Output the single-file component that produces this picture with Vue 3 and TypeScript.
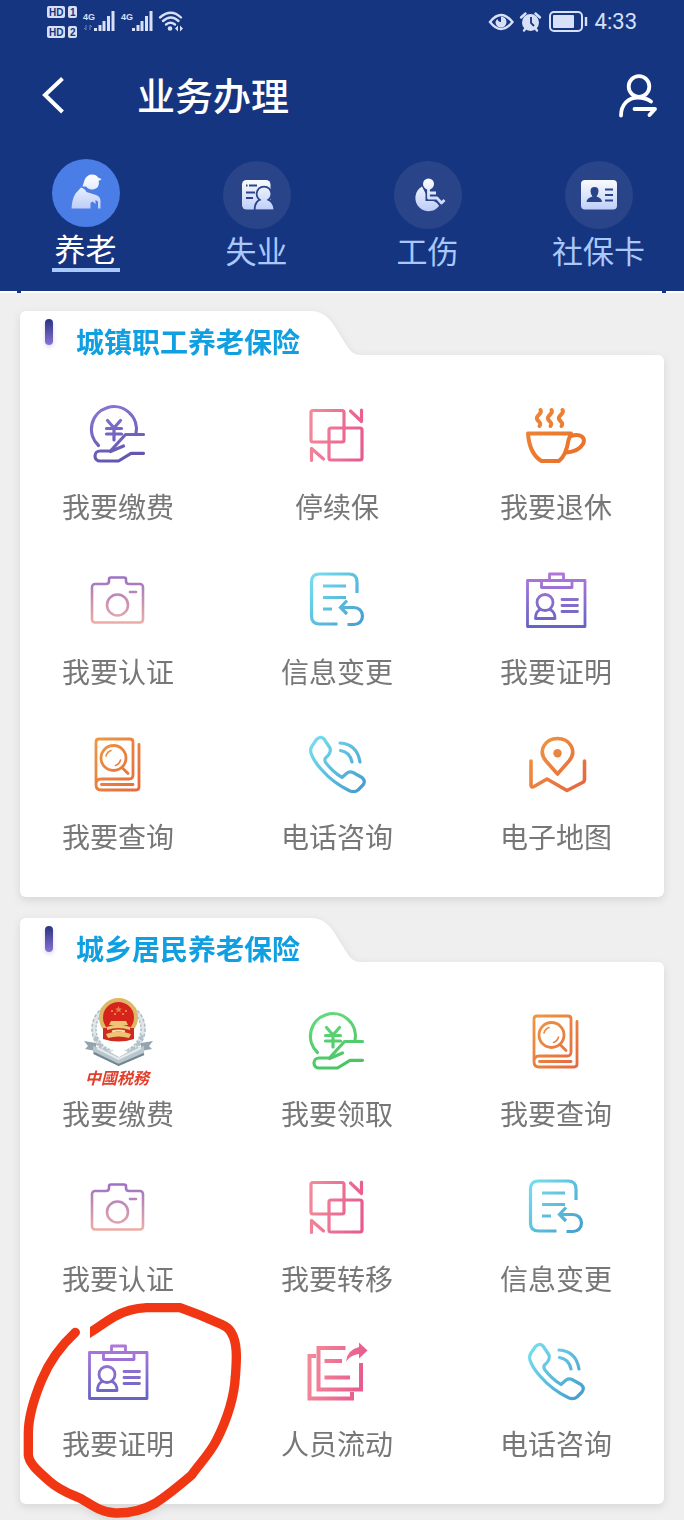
<script setup lang="ts">
import { ref } from 'vue'

interface Glyph {
  tone: string
  width: number
  strokes: string[]
  solids?: string[]
  sharp?: boolean
}

interface Service {
  label: string
  icon: string
  tone?: string
  marked?: boolean
}

interface Section {
  title: string
  services: Service[]
}

const tabs = [
  { id: 'elder', label: '养老' },
  { id: 'jobless', label: '失业' },
  { id: 'injury', label: '工伤' },
  { id: 'card', label: '社保卡' },
]
const active = ref('elder')

const glyphs: Record<string, Glyph> = {
  coin: {
    tone: 'violet',
    width: 3.2,
    strokes: [
      'M16.5 46.5A22.5 22.5 0 1 1 54 34.5',
      'M61.5 35.5H43.5L28.5 52H18a5 5 0 0 0 0 10H36.5L49 54.3H61.5',
      'M28.5 52.5L41.500 47',
      'M25.5 21.5L32 29L38.5 21.5M32 29V41M24.5 29.5H39.5M24.5 35H39.5',
    ],
  },
  swap: {
    tone: 'pink',
    width: 3.2,
    strokes: [
      'M12 11.5H41a2 2 0 0 1 2 2V41a2 2 0 0 1-2 2H12a2 2 0 0 1-2-2V13.5a2 2 0 0 1 2-2z',
      'M30 29H59a2 2 0 0 1 2 2V59a2 2 0 0 1-2 2H30a2 2 0 0 1-2-2V31a2 2 0 0 1 2-2z',
      'M49.5 12L60.500 22.5V11',
      'M22.5 60L10.500 49.5V61.5',
    ],
  },
  cup: {
    tone: 'orange',
    width: 4,
    strokes: [
      'M8 34.5H51L48.5 41C47 51 44 58 39 62H21.5C13 57 9 48 8 34.5z',
      'M51 37C61 34 66 39 63 45C60 50 54 53 46 53.5',
      'M20.5 11C23 15 15.5 16 17 20C18 23 22 23 19.5 27',
      'M31.5 11C34 15 26.5 16 28 20C29 23 33 23 30.5 27',
      'M42.5 11C45 15 37.5 16 39 20C40 23 44 23 41.5 27',
    ],
  },
  camera: {
    tone: 'blush',
    width: 2.6,
    strokes: [
      'M13 20H24q3 0 3-3V15.5q0-2 2-2H42q2 0 2 2V17q0 3 3 3H58a3 3 0 0 1 3 3V55.5a3 3 0 0 1-3 3H13a3 3 0 0 1-3-3V23a3 3 0 0 1 3-3z',
      'M35.5 30.5a10.5 10.5 0 1 1 0 21a10.5 10.5 0 1 1 0-21z',
      'M48 28H54',
    ],
  },
  change: {
    tone: 'cyan',
    width: 3.2,
    sharp: true,
    strokes: [
      'M56 29V18q0-8-8-8H18.5q-8 0-8 8V52q0 8 8 8H36.5',
      'M22 22H45M22 33.5H45M22 45H31',
      'M46.5 60.5H53A8.5 8.5 0 0 0 53 43.5H40',
      'M46 36.5L39.5 43.5L46 50',
    ],
  },
  badge: {
    tone: 'lilac',
    width: 2.8,
    strokes: [
      'M7.5 16.5H65V62.5H7.5z',
      'M29.5 16V10H43.5V16',
      'M21.5 17V23.5H52V17',
      'M25 30.5a8 8 0 1 1 0 16a8 8 0 1 1 0-16z',
      'M20 45.5C17 47 15.5 50 15.5 54.5H35C35 50 33.5 47 30 45.5',
      'M42 35.5H57.5M42 41.5H57.5M42 47.5H57.5',
    ],
  },
  book: {
    tone: 'amber',
    width: 2.8,
    strokes: [
      'M14 56V13q0-3 3-3H48q3 0 3 3V46q0 4-4 4H19q-5 0-5 5.5T19 61H54q3 0 3-3V15.5',
      'M19.5 55.5H51',
      'M31.5 16.5a12.5 12.5 0 1 1 0 25a12.5 12.5 0 1 1 0-25z',
      'M40 38.5L46 44.5',
    ],
  },
  phone: {
    tone: 'cyan',
    width: 3.2,
    strokes: [
      'M11 17L15.500 10.500Q19.500 6.500 23 10L29 19Q30.500 24 24.500 29Q23 31 25 34Q32 43 41 48.500L46 44Q49 42 52 43.500L61 48.500Q65 52 62 56L57 61Q54 63.500 49 62Q32 54 20 40Q12 31 10 24Q9 20 11 17z',
      'M39 14Q56 15 59 33',
      'M39.5 21.5Q49 23 51 33',
    ],
  },
  map: {
    tone: 'amber',
    width: 3.6,
    strokes: [
      'M37.5 45L26 32C17 21 26 9.5 37.5 9.5C49 9.5 58 21 49 32z',
      'M11 32V56Q11 59 14 57.5L27 50L47 61.5L62.5 53.5Q64.5 52.5 64.5 50V32',
    ],
    solids: ['M37.5 20a4.2 4.2 0 1 1 0 8.4a4.2 4.2 0 1 1 0-8.4z'],
  },
  share: {
    tone: 'pink',
    width: 4,
    sharp: true,
    strokes: [
      'M15 20H8.5V62.5H51V56',
      'M44.5 12H17.5V53.5H60V27',
      'M23.5 25H41M23.5 41.5H49',
    ],
    solids: ['M66.5 14.5L58 6.5V11Q46 14 45 25.5Q50 18.5 58 18V22.5z'],
  },
}

const sections: Section[] = [
  {
    title: '城镇职工养老保险',
    services: [
      { label: '我要缴费', icon: 'coin' },
      { label: '停续保', icon: 'swap' },
      { label: '我要退休', icon: 'cup' },
      { label: '我要认证', icon: 'camera' },
      { label: '信息变更', icon: 'change' },
      { label: '我要证明', icon: 'badge' },
      { label: '我要查询', icon: 'book' },
      { label: '电话咨询', icon: 'phone' },
      { label: '电子地图', icon: 'map' },
    ],
  },
  {
    title: '城乡居民养老保险',
    services: [
      { label: '我要缴费', icon: 'tax' },
      { label: '我要领取', icon: 'coin', tone: 'green' },
      { label: '我要查询', icon: 'book' },
      { label: '我要认证', icon: 'camera' },
      { label: '我要转移', icon: 'swap' },
      { label: '信息变更', icon: 'change' },
      { label: '我要证明', icon: 'badge', marked: true },
      { label: '人员流动', icon: 'share' },
      { label: '电话咨询', icon: 'phone' },
    ],
  },
]

const tones = [
  { id: 'violet', from: '#8f7ad6', to: '#5f54ae', x2: 20, y2: 70 },
  { id: 'green', from: '#67dc80', to: '#48c463', x2: 20, y2: 70 },
  { id: 'pink', from: '#f5929a', to: '#e6578f', x2: 72, y2: 20 },
  { id: 'orange', from: '#ee8a3c', to: '#ea6f28', x2: 50, y2: 72 },
  { id: 'amber', from: '#f0a040', to: '#e5683f', x2: 60, y2: 60 },
  { id: 'blush', from: '#9068c8', to: '#f4b0a4', x2: 0, y2: 62 },
  { id: 'cyan', from: '#7ce8f2', to: '#3f98cc', x2: 66, y2: 66 },
  { id: 'lilac', from: '#b578da', to: '#6264c4', x2: 0, y2: 64 },
]

const wreath = Array.from({ length: 9 }, (_, i) => 20 + i * 17)
</script>

<template>
  <div class="page">
    <svg class="defs" width="0" height="0" aria-hidden="true">
      <defs>
        <linearGradient v-for="t in tones" :id="t.id" :key="t.id" gradientUnits="userSpaceOnUse" x1="0" y1="6" :x2="t.x2" :y2="t.y2">
          <stop offset="0" :stop-color="t.from" />
          <stop offset="1" :stop-color="t.to" />
        </linearGradient>
        <linearGradient id="frost" gradientUnits="userSpaceOnUse" x1="0" y1="16" x2="0" y2="50">
          <stop offset="0" stop-color="#ffffff" />
          <stop offset="1" stop-color="#bccdf8" />
        </linearGradient>
      </defs>
    </svg>

    <header class="top">
      <div class="status">
        <svg width="140" height="36" viewBox="46 4 140 36" aria-hidden="true">
          <g fill="#d7e0f7">
            <rect x="47" y="6" width="18" height="12" rx="2" />
            <rect x="68" y="6" width="9" height="12" rx="2" />
            <rect x="47" y="26" width="18" height="12" rx="2" />
            <rect x="68" y="26" width="9" height="12" rx="2" />
            <path d="M94 28h3v3h-3zM98.500 25h3v6h-3zM102.500 21h3v10h-3zM107 16h3v15h-3zM111.500 11h3v20h-3z" />
            <path d="M132 28h3v3h-3zM136.500 25h3v6h-3zM140.500 21h3v10h-3zM145 16h3v15h-3zM149.500 11h3v20h-3z" />
            <circle cx="170" cy="28.500" r="2.300" />
            <path d="M178 25.500l-3 3l3 3zM180 25.500l3 3l-3 3z" />
          </g>
          <g class="net">
            <text x="83" y="20">4G</text>
            <text x="121" y="20">4G</text>
          </g>
          <g class="hd">
            <text x="49" y="16">HD</text>
            <text x="70" y="16">1</text>
            <text x="49" y="36">HD</text>
            <text x="70" y="36">2</text>
          </g>
          <path d="M86 25v5M84 28l2 2M90 30v-5M92 27l-2-2" stroke="#6f86bd" fill="none" />
          <path d="M160 17.500Q171 8 181 17.500M163 21Q171 14 178.500 21M166 24.500Q170.500 21 175 24.500" stroke="#d7e0f7" stroke-width="2.400" fill="none" stroke-linecap="round" />
        </svg>
        <div class="right">
          <svg width="100" height="26" viewBox="488 9 100 26" aria-hidden="true">
            <path d="M490 22Q501 8 512.500 22Q501 36 490 22z" fill="none" stroke="#d7e0f7" stroke-width="2.400" />
            <path d="M501 22V16.500A5.500 5.500 0 1 1 495.500 22Q496 20 497.500 19Q498 22 501 22z" fill="#d7e0f7" />
            <circle cx="530.500" cy="22.500" r="8.500" fill="#d7e0f7" />
            <path d="M521 17.500l4.500-4M540 17.500l-4.500-4M524 30.500l2-2.500M537 30.500l-2-2.500" stroke="#d7e0f7" stroke-width="2.400" stroke-linecap="round" />
            <path d="M531 17v6l3 3" stroke="#163581" stroke-width="1.800" fill="none" />
            <rect x="550" y="12" width="32" height="19" rx="4" fill="none" stroke="#d7e0f7" stroke-width="2" />
            <rect x="553" y="15" width="21" height="13" rx="1" fill="#d7e0f7" />
            <path d="M586 17v9" stroke="#d7e0f7" stroke-width="2.400" />
          </svg>
          <time>4:33</time>
        </div>
      </div>

      <div class="titlebar">
        <button type="button" aria-label="返回">
          <svg width="28" height="40" viewBox="0 0 28 40"><path d="M22.500 2.500L5 19L22.500 36" fill="none" stroke="#fff" stroke-width="4" /></svg>
        </button>
        <h1>业务办理</h1>
        <button type="button" aria-label="我的">
          <svg width="40" height="44" viewBox="618 75 40 44" fill="none" stroke="#fff" stroke-width="3.800" stroke-linecap="round" stroke-linejoin="round">
            <circle cx="639" cy="87.500" r="10.300" />
            <path d="M621 116.500C621 106 628 98.500 638 98.500C643 98.500 647 99.500 651 102.500" />
            <path d="M634.500 110H655L649.500 116" />
          </svg>
        </button>
      </div>

      <nav class="tabs">
        <button v-for="t in tabs" :key="t.id" type="button" class="tab" :class="{ on: active === t.id }" @click="active = t.id">
          <svg class="disc" viewBox="0 0 68 68" aria-hidden="true">
            <g v-if="t.id === 'elder'" fill="url(#frost)">
              <path d="M30.500 27.500L32.500 21Q35 15.500 40 15.500Q44.500 15.500 46 18.500L49.500 20Q48.500 21.500 46.800 21.500Q48 29.500 41 30.500Q36.500 31 34 27.500z" />
              <path d="M19.500 49.500Q20 40 23.500 34.500L29 28.500Q33 29.500 34.500 33L44 36Q48.500 37.500 48.500 42V49.500H46V42.500L43.500 41V45L40.500 42.500L38.500 44V49.500z" />
            </g>
            <g v-else-if="t.id === 'jobless'">
              <rect x="19" y="19" width="28.500" height="29.500" rx="4.500" fill="url(#frost)" />
              <path d="M23 24.500h1.500M26 24.500h8M23 31.500h9M23 37h7" stroke="#2a4489" stroke-width="1.800" />
              <g fill="url(#frost)" stroke="#2a4489" stroke-width="3.600" paint-order="stroke">
                <path d="M32.500 48.500Q32.500 41 38.500 39Q34.500 36.500 34.500 32.500Q35.500 26.500 41 26.500T47.500 32.500Q47.500 36.500 43.500 39Q50 41 50.500 48.500z" />
              </g>
              <path d="M31 48.700H52V52H31z" fill="#2a4489" />
            </g>
            <g v-else-if="t.id === 'injury'">
              <path d="M28 25.500A13.200 13.200 0 1 0 46 43.500L34 37z" fill="url(#frost)" />
              <path d="M34.500 28V37H43L47.500 43L51 38.500M35 32.500H43" fill="none" stroke="#2a4489" stroke-width="6" />
              <path d="M34.500 28V37H43L47.500 42L50.500 39M35 32H42" fill="none" stroke="url(#frost)" stroke-width="2.800" stroke-linejoin="round" />
              <circle cx="34.500" cy="23" r="5.500" fill="url(#frost)" />
            </g>
            <g v-else>
              <rect x="16" y="19" width="36" height="29.500" rx="4" fill="url(#frost)" />
              <path d="M21.500 41Q21.500 37 27.500 35.500Q25.500 33 25.500 30Q25.500 26 29.500 26T33.500 30Q33.500 33 31.500 35.500Q37 37 37 41z" fill="#2a4489" />
              <path d="M40 28.500h8M40 34h8M40 39.500h8" stroke="#2a4489" stroke-width="2" />
            </g>
          </svg>
          <span class="tab-label">{{ t.label }}</span>
        </button>
      </nav>
    </header>

    <main class="content">
      <section v-for="s in sections" :key="s.title" class="card">
        <div class="card-head">
          <div class="card-title">
            <i class="bar"></i>
            <h2>{{ s.title }}</h2>
          </div>
          <svg width="58" height="44" viewBox="0 0 58 44" aria-hidden="true"><path d="M0 0H7C20 0 27 7 34 19L42 32C47 40 50 44 58 44H0z" fill="#fff" /></svg>
        </div>
        <div class="grid">
          <button v-for="(item, i) in s.services" :key="i" type="button" class="item">
            <svg v-if="item.icon === 'tax'" class="icon" viewBox="0 0 72 72" aria-hidden="true">
              <g fill="none" stroke="#aebcc4">
                <circle cx="36.500" cy="23" r="24.500" stroke-width="5" stroke="#dfe6e9" />
                <circle cx="36.500" cy="23" r="26.500" stroke-width="1.500" stroke-dasharray="3 2" />
                <circle cx="36.500" cy="23" r="22.500" stroke-width="1.500" stroke-dasharray="2 2" />
              </g>
              <g fill="#b3c0c7">
                <ellipse v-for="a in wreath" :key="a" cx="61" cy="23" rx="1.500" ry="3" :transform="`rotate(${a} 36.5 23)`" />
              </g>
              <path d="M2 35L14 37V45L3 43L6 40z" fill="#94a4ad" />
              <path d="M71 35L59 37V45L70 43L67 40z" fill="#94a4ad" />
              <path d="M11 40L25 44Q36.500 54 48 44L62 40V49L37 60L11 48z" fill="#b9c6cd" />
              <path d="M12 47L36.500 59L62 48" fill="none" stroke="#718690" stroke-width="2" />
              <path d="M15 42L36.500 53L59 42" fill="none" stroke="#e4ebee" stroke-width="2" />
              <path d="M28 46Q36.500 40 46 46L37 51z" fill="#fff" />
              <circle cx="36.500" cy="11.500" r="17.500" fill="#d6241d" stroke="#dcb867" stroke-width="4" />
              <path d="M21 22h31v11Q36.500 38 21 33z" fill="#ce2b20" />
              <path d="M29 15h15l2 4H27zM25 21q11.500-5 23 0v3q-11.500-4-23 0zM24 28q12.500-5 25 0l-2 4q-10.500-3-21 0z" fill="#ecc575" />
              <path d="M30 25.500q6.500-2 13 0" fill="none" stroke="#f7e1a4" stroke-width="2" />
              <path d="M36.500 0l1 2.500h2.500l-2 1.500l1 2.500l-2.500-1.500l-2.500 1.500l1-2.500l-2-1.500h2.500z" fill="#e88143" />
              <path d="M29 5h2M32 8h2M40 8h2M43 5h2" stroke="#e88143" stroke-width="2" />
              <text class="tax-name" x="3" y="78">中國税務</text>
            </svg>
            <svg v-else class="icon" viewBox="0 0 72 72" aria-hidden="true">
              <g
                fill="none"
                :stroke="`url(#${item.tone ?? glyphs[item.icon].tone})`"
                :stroke-width="glyphs[item.icon].width"
                :stroke-linecap="glyphs[item.icon].sharp ? 'butt' : 'round'"
                :stroke-linejoin="glyphs[item.icon].sharp ? 'miter' : 'round'"
              >
                <path v-for="d in glyphs[item.icon].strokes" :key="d" :d="d" />
                <path v-if="item.icon === 'book'" d="M24 27q1-4 5-5.500M38.500 31q-1 4-5 5.500" stroke-width="1.600" />
              </g>
              <path v-for="d in glyphs[item.icon].solids ?? []" :key="d" :d="d" :fill="`url(#${glyphs[item.icon].tone})`" />
            </svg>
            <span class="label">{{ item.label }}</span>
            <svg v-if="item.marked" class="mark" viewBox="0 0 780 690" aria-hidden="true">
              <g fill="none" stroke="#f13613" stroke-width="28" stroke-linejoin="round">
                <path stroke-linecap="round" d="M226 127C190 160 150 210 125 270C100 330 85 390 85 430V495C88 520 110 540 150 575C185 605 220 615 245 627C275 645 305 668 345 669C390 670 430 660 465 640C505 615 540 585 575 555C600 520 630 490 650 450C680 390 702 330 706 260" />
                <path d="M706 262C710 210 712 170 700 140C690 115 680 110 655 99C620 83 580 67 540 53H440C400 55 370 65 345 79C315 97 290 115 263 132" />
              </g>
              <path d="M244 90H270V160H244z" fill="#fff" />
            </svg>
          </button>
        </div>
      </section>
    </main>
  </div>
</template>

<style>
body {
  background: #efeff0;
}
</style>

<style scoped>
.page {
  min-height: 100vh;
  background: #efeff0;
  font-family: "Noto Sans CJK SC", "Noto Sans", sans-serif;
  overflow: hidden;
}

.defs {
  position: absolute;
}

button {
  appearance: none;
  border: 0;
  padding: 0;
  background: none;
  font: inherit;
  color: inherit;
  cursor: pointer;
}

svg {
  display: block;
}

h1,
h2 {
  margin: 0;
}

.top {
  background: #163581;
  color: #fff;
  padding-bottom: 19px;
}

.status {
  display: flex;
  justify-content: space-between;
  padding: 4px 47px 4px 46px;
}

.right {
  display: flex;
  align-items: center;
  gap: 7px;
}

time {
  font-family: Roboto, sans-serif;
  font-size: 22px;
  line-height: 36px;
  color: #d7e0f7;
}

.net {
  fill: #d7e0f7;
  font: bold 9px "Liberation Sans", sans-serif;
}

.hd {
  fill: #163581;
  font: bold 10px "Liberation Sans", sans-serif;
}

.titlebar {
  display: flex;
  align-items: center;
  padding: 22px 26px 24px 40px;
}

h1 {
  flex: 1;
  padding: 0 0 4px 69px;
  font-size: 38px;
  font-weight: 500;
  line-height: 56px;
}

.tabs {
  display: grid;
  grid-template-columns: repeat(4, 1fr);
  padding-top: 9px;
}

.tab {
  display: flex;
  flex-direction: column;
  align-items: center;
  gap: 3px;
  padding-top: 2px;
  color: #a9c8fb;
}

.tab.on {
  padding-top: 0;
  color: #fff;
}

.disc {
  width: 68px;
  height: 68px;
  border-radius: 50%;
  background: #2a4489;
}

.on .disc {
  background: #4a7de6;
}

.tab-label {
  min-width: 68px;
  padding-bottom: 2px;
  font-size: 31px;
  line-height: 36px;
}

.on .tab-label {
  border-bottom: 4px solid #a9c8fb;
}

.content {
  position: relative;
  display: flex;
  flex-direction: column;
  gap: 21px;
  padding: 18px 20px 16px;
  border-top: 2px solid #fff;
}

.content::before,
.content::after {
  content: "";
  position: absolute;
  top: -2px;
  width: 4px;
  height: 2px;
  background: #163581;
}

.content::before {
  left: 17px;
}

.content::after {
  right: 18px;
}

.card {
  filter: drop-shadow(0 3px 4px rgba(0, 0, 0, 0.1));
}

.card-head {
  display: flex;
  height: 44px;
}

.card-title {
  display: flex;
  gap: 23px;
  padding: 0 3px 0 25px;
  background: #fff;
  border-radius: 6px 0 0 0;
}

.bar {
  width: 8px;
  height: 26px;
  margin-top: 8px;
  border-radius: 4px;
  background: linear-gradient(#27357f, #8b72d6);
  box-shadow: 0 2px 4px rgba(139, 114, 214, 0.3);
}

h2 {
  padding-top: 10px;
  font-size: 28px;
  font-weight: 700;
  line-height: 40px;
  height: 34px;
  white-space: nowrap;
  color: #109fe0;
}

.grid {
  display: grid;
  grid-template-columns: repeat(3, 112px);
  justify-content: space-between;
  row-gap: 38px;
  padding: 44px 52px 41px 42px;
  background: #fff;
  border-radius: 0 6px 6px 6px;
}

.item {
  position: relative;
  display: flex;
  flex-direction: column;
  align-items: center;
  gap: 15px;
}

.icon {
  width: 72px;
  height: 72px;
  overflow: visible;
}

.label {
  font-size: 28px;
  line-height: 40px;
  white-space: nowrap;
  color: #777;
}

.tax-name {
  fill: #e0402c;
  font: italic bold 16px "Noto Sans CJK SC", sans-serif;
}

.mark {
  position: absolute;
  left: -62px;
  top: -46px;
  width: 260px;
  height: 230px;
  pointer-events: none;
}
</style>
